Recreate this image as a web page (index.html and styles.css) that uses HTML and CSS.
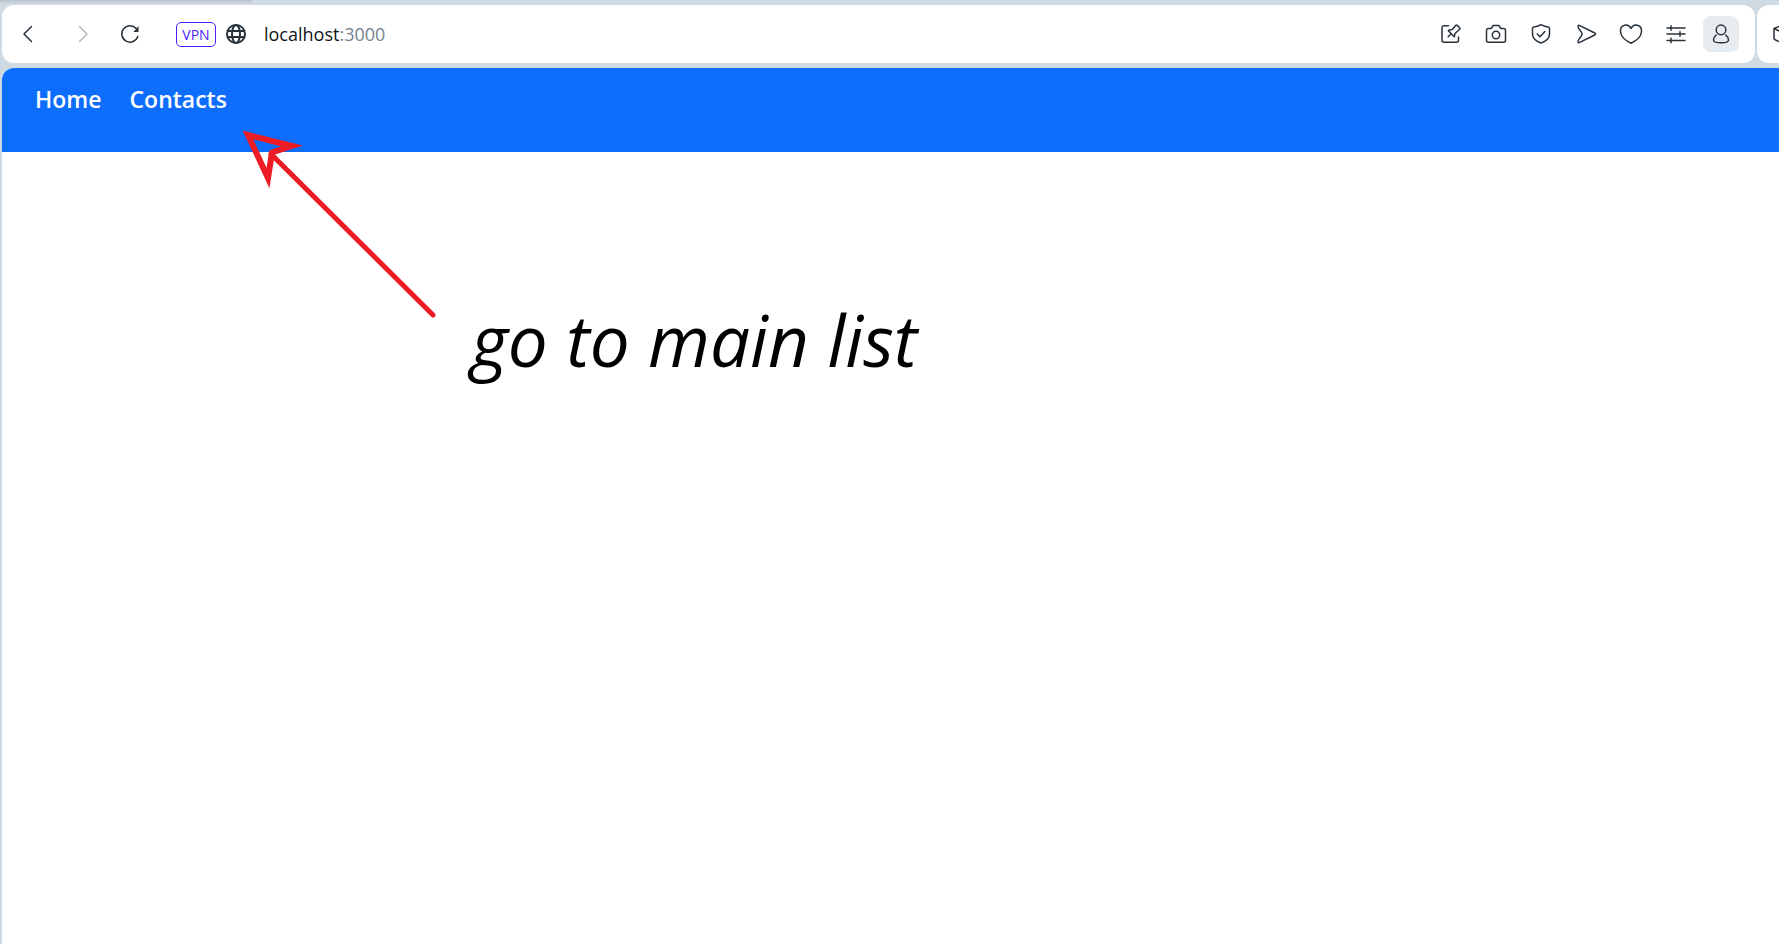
FILE: index.html
```html
<!DOCTYPE html>
<html lang="en">
<head>
<meta charset="utf-8">
<meta name="viewport" content="width=device-width, initial-scale=1">
<title>localhost:3000</title>
<link rel="stylesheet" href="styles.css">
</head>
<body>
<div class="tab-strip"><div class="tab-shadow"></div></div>
<div class="chrome">
  <div class="toolbar">
    <div class="nav-buttons">
      <button class="tool" type="button" aria-label="Back"><svg viewBox="0 0 24 24"><path d="M15.500 4.500 8 12l7.500 7.500"/></svg></button>
      <button class="tool tool-disabled" type="button" aria-label="Forward" disabled><svg viewBox="0 0 24 24"><path d="M12.500 4.500 20 12l-7.500 7.500"/></svg></button>
      <button class="tool" type="button" aria-label="Reload"><svg viewBox="0 0 24 24"><path d="M19.800 14.500A8.200 8.200 0 1 1 18.200 6.500"/><path class="solid" d="M20.500 4v6h-5z"/></svg></button>
    </div>
    <div class="address">
      <button class="vpn" type="button">VPN</button>
      <button class="site" type="button" aria-label="Site information"><svg viewBox="0 0 24 24"><circle cx="12" cy="12" r="9"/><ellipse cx="12" cy="12" rx="4" ry="9"/><path d="M3.500 9h17M3.500 15h17"/></svg></button>
      <a class="url" href="#">localhost<span class="port">:3000</span></a>
    </div>
    <div class="actions">
      <button class="tool" type="button" aria-label="Edit pinned"><svg viewBox="0 0 24 24"><path d="M9.500 3.700H5a2 2 0 0 0-2 2v12.600a2 2 0 0 0 2 2h12.500a2 2 0 0 0 2-2V15"/><path d="m9.200 14.700 3-3M9.300 8.800l6 6 .7-3.300 4.600-4.200q.8-.7 0-1.500l-2.400-2.400q-.8-.8-1.500 0l-3.400 4.100-3.600.7z"/></svg></button>
      <button class="tool" type="button" aria-label="Snapshot"><svg viewBox="0 0 24 24"><path d="M4.500 6.500h2.300q.8 0 1.100-.8l.5-1.200q.4-1 1.400-1h4.400q1 0 1.400 1l.5 1.200q.3.800 1.100.8h2.300a2 2 0 0 1 2 2v9.800a2 2 0 0 1-2 2h-15a2 2 0 0 1-2-2V8.500a2 2 0 0 1 2-2z"/><circle cx="12" cy="13" r="3.700"/></svg></button>
      <button class="tool" type="button" aria-label="Ad blocker"><svg viewBox="0 0 24 24"><path d="M12 2.700c2.600 1.500 5 2.200 7.300 2.300q1.200.1 1.200 1.500V12c0 4.500-3.500 7.200-8.500 9-5-1.800-8.500-4.500-8.500-9V6.500Q3.500 5.100 4.700 5C7 4.900 9.400 4.200 12 2.700z"/><path d="m8.200 12 2.700 2.800 5-5.300"/></svg></button>
      <button class="tool" type="button" aria-label="Send"><svg viewBox="-1 0 24 24"><path d="M4.200 3.400 19.800 11q1.400 1 0 2L4.200 20.600Q2.800 21 3 19.500c.2-3 3.800-4.400 4.100-7.500C6.800 8.900 3.200 7.500 3 4.500q-.2-1.500 1.200-1.100z"/></svg></button>
      <button class="tool" type="button" aria-label="Bookmark"><svg viewBox="0 0 24 24"><path d="M12 6.500C10.600 3.700 8 2.700 5.500 3.300 2.700 4 1.300 6.500 1.500 9.500c.3 5.300 5.500 9.400 10.500 11.700 5-2.300 10.200-6.400 10.500-11.700.2-3-1.200-5.500-4-6.200C16 2.700 13.400 3.700 12 6.500z"/></svg></button>
      <button class="tool" type="button" aria-label="Easy setup"><svg viewBox="0 0 24 24"><path d="M3 6h18M3 12h18M3 18.500h18M7 3.700v4.600M16 9.700v4.600M7 16.200v4.600"/></svg></button>
      <button class="tool tool-active" type="button" aria-label="Profile"><svg viewBox="0 0 24 24"><circle cx="12" cy="7.900" r="4.800"/><path d="M7.300 13c-2 1.400-2.800 3.500-2.700 5.500.2 1.500 2.700 2.200 7.400 2.200s7.200-.7 7.400-2.200c.1-2-.7-4.100-2.700-5.500"/></svg></button>
    </div>
  </div>
  <div class="side-panel">
    <button class="tool" type="button" aria-label="Extensions"><svg viewBox="0 0 24 24"><path d="m11.500 3 8.500 3v11l-8.500 4L4.500 18q-1.500-.5-1.500-2V6.500zM3 6.500l8.500 4L20 6M11.500 10.500V21"/></svg></button>
  </div>
</div>
<div class="page">
  <nav class="navbar">
    <a class="nav-link" href="#">Home</a>
    <a class="nav-link" href="#">Contacts</a>
  </nav>
  <main class="content">
    <p class="note">go to main list</p>
  </main>
  <svg class="arrow" viewBox="0 0 200 200" aria-hidden="true"><path class="head" d="M6 5 50 16 30 22.500 26 48z"/><path class="shaft" d="M29 24 191 185"/></svg>
</div>
</body>
</html>
```
FILE: styles.css
```css
* { box-sizing: border-box; }

body {
  margin: 0;
  min-height: 100vh;
  display: flex;
  flex-direction: column;
  background: #d0dae3;
  font-family: "Open Sans", "Noto Sans", sans-serif;
  overflow-x: hidden;
}

button {
  margin: 0;
  padding: 0;
  border: 0;
  background: none;
  font: inherit;
  color: inherit;
}

a { text-decoration: none; }

.tab-strip { height: 5px; }

.tab-shadow {
  width: 252px;
  height: 4px;
  background: linear-gradient(#b8c1c9, #d0dae3);
}

.chrome {
  display: flex;
  gap: 2px;
  padding-left: 2px;
  margin-bottom: 5px;
  overflow: hidden;
}

.toolbar,
.side-panel {
  height: 58px;
  display: flex;
  align-items: center;
  background: #fff;
  border-radius: 12px;
}

.toolbar {
  flex: 1;
  padding: 0 16px 0 8px;
}

.side-panel {
  width: 22px;
  flex: none;
  padding-left: 8px;
  border-radius: 12px 0 0 12px;
  overflow: hidden;
}

.tool {
  width: 36px;
  height: 36px;
  flex: none;
  display: flex;
  align-items: center;
  justify-content: center;
  border-radius: 8px;
  color: #28323b;
}

.tool-disabled { color: #b4b9be; }
.tool-active { background: #e7ecf1; }

svg {
  fill: none;
  stroke: currentColor;
  stroke-width: 1.500;
  stroke-linejoin: round;
}

.tool svg {
  width: 24px;
  height: 24px;
  flex: none;
  stroke-linecap: round;
}

.solid { fill: currentColor; stroke: none; }

.nav-buttons { display: flex; gap: 15px; }

.address {
  flex: 1;
  display: flex;
  align-items: center;
  margin-left: 28px;
}

.vpn {
  width: 40px;
  height: 25px;
  border: 1px solid #4b1fff;
  border-radius: 5px;
  color: #4b1fff;
  font-size: 14px;
  line-height: 24px;
}

.site {
  width: 24px;
  height: 24px;
  margin: 0 16px 0 8px;
  color: #28323b;
}

.site svg {
  display: block;
  width: 24px;
  height: 24px;
  stroke-width: 2;
}

.url {
  font-size: 18px;
  line-height: 24px;
  color: #101418;
}

.port { color: #74838f; }

.actions { display: flex; gap: 9px; }

.page {
  position: relative;
  flex: 1;
  margin-left: 2px;
  background: #fff;
  border-top-left-radius: 12px;
}

.navbar {
  display: flex;
  gap: 28px;
  height: 84px;
  padding: 16px 33px;
  background: #0d6efd;
  border-top-left-radius: 12px;
}

.nav-link {
  font-size: 23px;
  font-weight: 600;
  line-height: 30px;
  color: #fff;
}

.content { padding: 140px 469px; }

.note {
  margin: 0;
  font-size: 71px;
  font-style: italic;
  line-height: 96px;
  color: #000;
  white-space: nowrap;
}

.arrow {
  position: absolute;
  left: 240px;
  top: 62px;
  width: 200px;
  height: 200px;
  color: #ed1c24;
}

.head { stroke-width: 6; stroke-linejoin: miter; stroke-miterlimit: 10; }
.shaft { stroke-width: 5; stroke-linecap: round; }
```
